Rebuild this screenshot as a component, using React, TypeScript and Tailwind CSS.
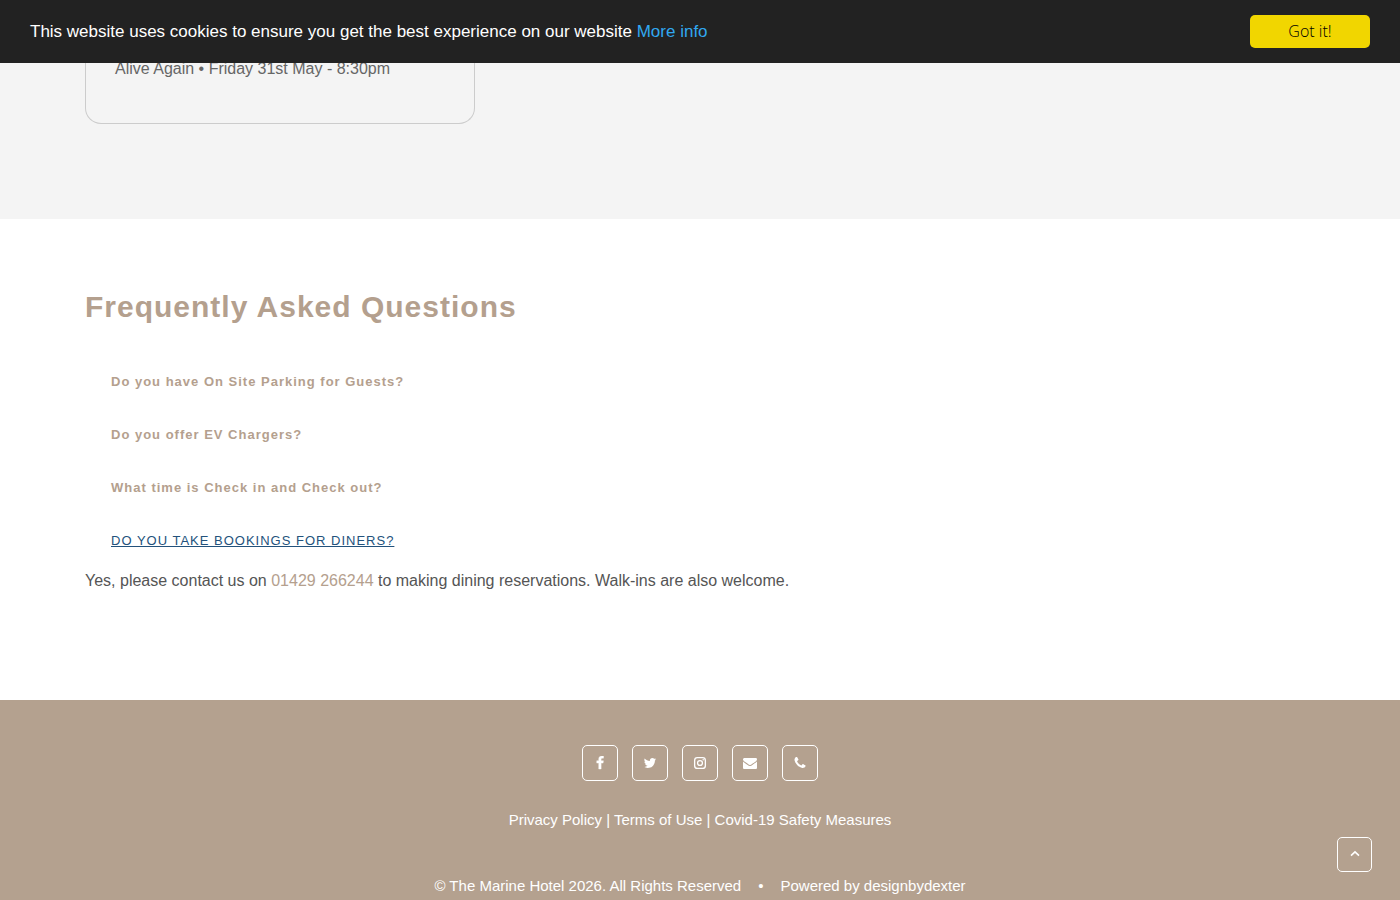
import { useState } from "react"
import type { ReactNode } from "react"

interface SocialLinkProps {
  href: string
  label: string
  children: ReactNode
}

const faqs = [
  {
    question: "Do you have On Site Parking for Guests?",
    answer: null,
  },
  {
    question: "Do you offer EV Chargers?",
    answer: null,
  },
  {
    question: "What time is Check in and Check out?",
    answer: null,
  },
  {
    question: "Do you take bookings for diners?",
    answer: (
      <>
        Yes, please contact us on{" "}
        <a href="tel:01429266244" className="text-[#b4a08e]">
          01429 266244
        </a>{" "}
        to making dining reservations. Walk-ins are also welcome.
      </>
    ),
  },
]

function CookieBar() {
  return (
    <div className="fixed inset-x-0 top-0 z-20 flex items-center justify-between bg-[#222222] px-[30px] py-[15px]">
      <p className="text-[17px] leading-6 text-white">
        This website uses cookies to ensure you get the best experience on our website{" "}
        <a href="#cookies" className="text-[#31a8f0]">
          More info
        </a>
      </p>
      <button
        type="button"
        className="h-[33px] w-[120px] rounded-[5px] bg-[#f1d600] pb-0.5 font-['Open_Sans',sans-serif] text-base font-light text-black"
      >
        Got it!
      </button>
    </div>
  )
}

function Events() {
  return (
    <section className="bg-[#f4f4f4] pb-[95px]">
      <div className="mx-auto max-w-[1260px] px-[15px]">
        <div className="w-full max-w-[390px] rounded-b-2xl border border-t-0 border-[#cccccc] px-[29px] pt-[57px] pb-[42px]">
          <p className="leading-6 text-[#666666]">Alive Again • Friday 31st May - 8:30pm</p>
        </div>
      </div>
    </section>
  )
}

function Faq() {
  const [open, setOpen] = useState(3)

  return (
    <section className="bg-white pt-[68px] pb-[107px]">
      <div className="mx-auto max-w-[1260px] px-[15px]">
        <h2 className="mb-[45px] text-[30px] leading-10 font-bold tracking-[1px] text-[#b4a08e]">
          Frequently Asked Questions
        </h2>
        <div className="flex flex-col gap-[33px]">
          {faqs.map((faq, i) => (
            <div key={faq.question}>
              <h3 className="flex pl-[26px]">
                <button
                  type="button"
                  aria-expanded={open === i}
                  onClick={() => setOpen(i)}
                  className={
                    open === i
                      ? "text-[13px] leading-5 tracking-[1px] text-[#23527c] uppercase underline"
                      : "text-[13px] leading-5 font-bold tracking-[1px] text-[#b4a08e]"
                  }
                >
                  {faq.question}
                </button>
              </h3>
              {open === i && faq.answer && <p className="mt-[18px] leading-6 text-[#555555]">{faq.answer}</p>}
            </div>
          ))}
        </div>
      </div>
    </section>
  )
}

function SocialLink({ href, label, children }: SocialLinkProps) {
  return (
    <a
      href={href}
      aria-label={label}
      className="flex h-9 w-9 items-center justify-center rounded-[5px] border border-white text-white"
    >
      <svg viewBox="0 0 1792 1792" fill="currentColor" className="h-3.5 w-3.5">
        {children}
      </svg>
    </a>
  )
}

function Footer() {
  return (
    <footer className="bg-[#b4a18f] pt-[45px] pb-0.5 text-center text-[15px] leading-6 text-white">
      <div className="flex justify-center gap-3.5">
        <SocialLink href="#facebook" label="Facebook">
          <path
            stroke="currentColor"
            strokeWidth="50"
            d="M1343 12v264h-157q-86 0-116 36t-30 108v189h293l-39 296h-254v759h-306v-759h-255v-296h255v-218q0-186 104-288.5t277-102.5q147 0 228 12z"
          />
        </SocialLink>
        <SocialLink href="#twitter" label="Twitter">
          <path d="M1684 408q-67 98-162 167 1 14 1 42 0 130-38 259.5t-115.5 248.5-184.5 210.5-258 146-323 54.5q-271 0-496-145 35 4 78 4 225 0 401-138-105-2-188-64.5t-114-159.5q33 5 61 5 43 0 85-11-112-23-185.5-111.5t-73.5-205.5v-4q68 38 146 41-66-44-105-115t-39-154q0-88 44-163 121 149 294.5 238.5t371.5 99.5q-8-38-8-74 0-134 94.5-228.5t228.5-94.5q140 0 236 102 109-21 205-78-37 115-142 178 93-10 186-50z" />
        </SocialLink>
        <SocialLink href="#instagram" label="Instagram">
          <rect x="210" y="210" width="1372" height="1372" rx="350" fill="none" stroke="currentColor" strokeWidth="170" />
          <circle cx="896" cy="896" r="315" fill="none" stroke="currentColor" strokeWidth="165" />
          <circle cx="1306" cy="486" r="95" />
        </SocialLink>
        <SocialLink href="#email" label="Email">
          <path d="M1792 710v794q0 66-47 113t-113 47h-1472q-66 0-113-47t-47-113v-794q44 49 101 87 362 246 497 345 57 42 92.5 65.5t94.5 48 110 24.5h2q51 0 110-24.5t94.5-48 92.5-65.5q170-123 498-345 57-39 100-87zm0-294q0 79-49 151t-122 123q-376 261-468 325-10 7-42.5 31t-54 38.5-52 32.5-57.5 27-50 9h-2q-23 0-50-9t-57.5-27-52-32.5-54-38.5-42.5-31q-91-64-262-182.5t-205-142.5q-62-42-117-115.5t-55-136.5q0-78 41.5-130t118.5-52h1472q65 0 112.5 47t47.5 113z" />
        </SocialLink>
        <SocialLink href="tel:01429266244" label="Phone">
          <path d="M1600 1240q0 27-10 70.5t-21 68.5q-21 50-122 106-94 51-186 51-27 0-53-3.5t-57.5-12.5-47-14.5-55.5-20.5-49-18q-98-35-175-83-127-79-264-216t-216-264q-48-77-83-175-3-9-18-49t-20.5-55.5-14.5-47-12.5-57.5-3.5-53q0-92 51-186 56-101 106-122 25-11 68.5-21t70.5-10q14 0 21 3 18 6 53 76 11 19 30 54t35 63.5 31 53.5q3 4 17.5 25t21.5 35.5 7 28.5q0 20-28.5 50t-62 55-62 53-28.5 46q0 9 5 22.5t8.5 20.5 14 24 11.5 19q76 137 174 235t235 174q2 1 19 11.5t24 14 20.5 8.5 22.5 5q18 0 46-28.5t53-62 55-62 50-28.5q14 0 28.5 7t35.5 21.5 25 17.5q25 15 53.5 31t63.5 35 54 30q70 35 76 53 3 7 3 21z" />
        </SocialLink>
      </div>
      <p className="mt-[27px]">
        <a href="#privacy">Privacy Policy</a> | <a href="#terms">Terms of Use</a> |{" "}
        <a href="#covid">Covid-19 Safety Measures</a>
      </p>
      <p className="mt-[42px] flex justify-center gap-[17px]">
        <span>© The Marine Hotel 2026. All Rights Reserved</span>
        <span>•</span>
        <span>
          Powered by <a href="#designbydexter">designbydexter</a>
        </span>
      </p>
    </footer>
  )
}

export default function App() {
  return (
    <div className="font-['Liberation_Sans',Arial,sans-serif] text-base">
      <CookieBar />
      <main>
        <Events />
        <Faq />
      </main>
      <Footer />
      <button
        type="button"
        aria-label="Back to top"
        onClick={() => window.scrollTo({ top: 0, behavior: "smooth" })}
        className="fixed right-7 bottom-7 z-10 flex h-[35px] w-[35px] items-center justify-center rounded-[5px] border border-white pb-0.5 text-white"
      >
        <svg viewBox="0 0 12 12" fill="none" stroke="currentColor" strokeWidth="1.6" className="h-3 w-3">
          <path d="M2 7.6 6 3.8l4 3.8" />
        </svg>
      </button>
    </div>
  )
}
